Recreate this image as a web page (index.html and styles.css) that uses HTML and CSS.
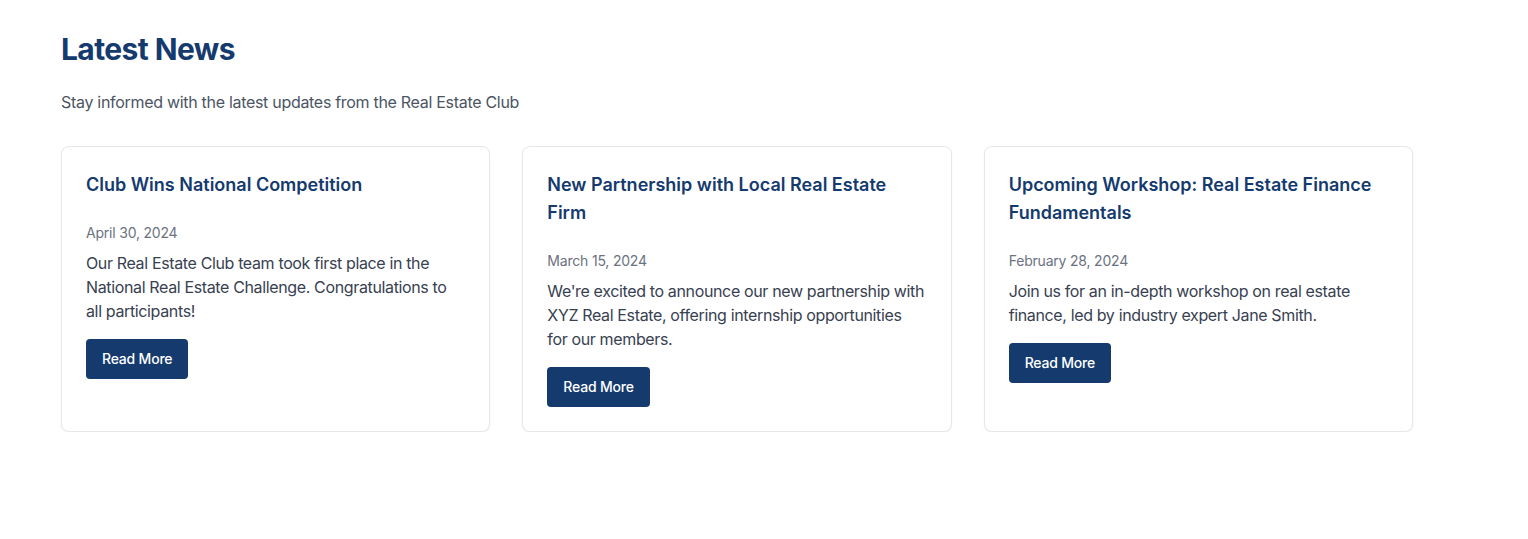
FILE: index.html
```html
<!DOCTYPE html>
<html lang="en">
<head>
<meta charset="utf-8">
<title>Latest News</title>
<link rel="stylesheet" href="styles.css">
</head>
<body>
<section class="news">
  <h1 class="news-title">Latest News</h1>
  <p class="news-subtitle">Stay informed with the latest updates from the Real Estate Club</p>
  <div class="news-grid">
    <article class="card">
      <h2 class="card-title">Club Wins National Competition</h2>
      <p class="card-date">April 30, 2024</p>
      <p class="card-text">Our Real Estate Club team took first place in the National Real Estate Challenge. Congratulations to all participants!</p>
      <a class="card-btn" href="#">Read More</a>
    </article>
    <article class="card">
      <h2 class="card-title">New Partnership with Local Real Estate Firm</h2>
      <p class="card-date">March 15, 2024</p>
      <p class="card-text">We're excited to announce our new partnership with XYZ Real Estate, offering internship opportunities for our members.</p>
      <a class="card-btn" href="#">Read More</a>
    </article>
    <article class="card">
      <h2 class="card-title">Upcoming Workshop: Real Estate Finance Fundamentals</h2>
      <p class="card-date">February 28, 2024</p>
      <p class="card-text">Join us for an in-depth workshop on real estate finance, led by industry expert Jane Smith.</p>
      <a class="card-btn" href="#">Read More</a>
    </article>
  </div>
</section>
</body>
</html>
```

FILE: styles.css
```css
* { box-sizing: border-box; }
html, body { margin: 0; padding: 0; background: #ffffff; }
body {
  font-family: Inter, "Noto Sans", "Liberation Sans", sans-serif;
  color: #374151;
}
.news {
  width: 1352px;
  margin-left: 61px;
  padding-top: 31px;
}
.news-title {
  margin: 0;
  font-size: 30px;
  line-height: 36px;
  font-weight: 700;
  letter-spacing: -0.6px;
  color: #143a6e;
}
.news-subtitle {
  margin: 23px 0 0;
  font-size: 16px;
  line-height: 24px;
  letter-spacing: -0.3px;
  color: #4b5563;
}
.news-grid {
  margin-top: 32px;
  display: grid;
  grid-template-columns: repeat(3, 1fr);
  gap: 32px;
}
.card {
  border: 1px solid #e5e7eb;
  border-radius: 8px;
  background: #fff;
  box-shadow: 0 1px 2px rgba(0,0,0,0.05);
  padding: 24px;
  display: flex;
  flex-direction: column;
  align-items: flex-start;
}
.card-title {
  margin: 0;
  font-size: 18px;
  line-height: 28px;
  font-weight: 600;
  letter-spacing: 0;
  color: #143a6e;
}
.card-date {
  margin: 24px 0 0;
  font-size: 14px;
  line-height: 20px;
  letter-spacing: -0.2px;
  color: #6b7280;
}
.card-text {
  margin: 8px 0 0;
  max-width: 377px;
  font-size: 16px;
  line-height: 24px;
  letter-spacing: -0.36px;
  color: #374151;
}
.card-btn {
  margin-top: 16px;
  display: inline-block;
  padding: 10px 16px;
  font-size: 14px;
  line-height: 20px;
  font-weight: 500;
  letter-spacing: -0.2px;
  color: #ffffff;
  background: #143a6e;
  border-radius: 4px;
  text-decoration: none;
}
```
